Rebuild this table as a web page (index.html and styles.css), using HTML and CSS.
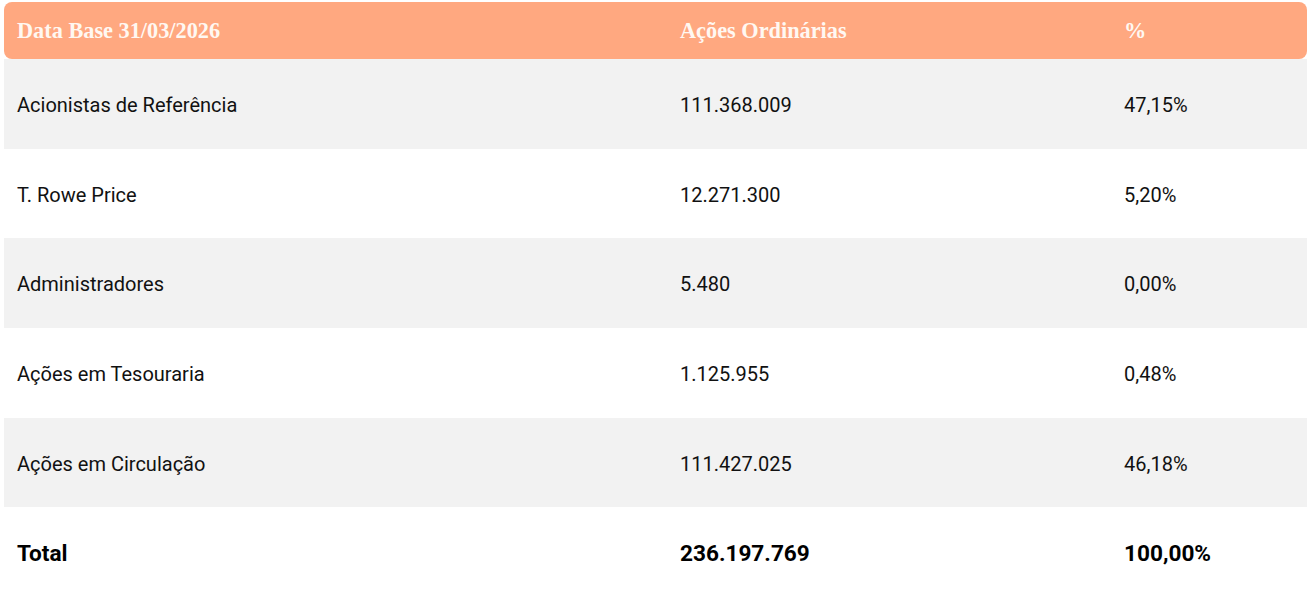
FILE: index.html
```html
<!DOCTYPE html>
<html lang="pt-BR">
<head>
<meta charset="utf-8">
<title>Composição Acionária</title>
<link rel="stylesheet" href="styles.css">
</head>
<body>
<table class="shares">
  <thead>
    <tr class="head-row">
      <th class="col-name">Data Base 31/03/2026</th>
      <th class="col-qty">Ações Ordinárias</th>
      <th class="col-pct">%</th>
    </tr>
  </thead>
  <tbody>
    <tr class="odd"><td>Acionistas de Referência</td><td>111.368.009</td><td>47,15%</td></tr>
    <tr><td>T. Rowe Price</td><td>12.271.300</td><td>5,20%</td></tr>
    <tr class="odd"><td>Administradores</td><td>5.480</td><td>0,00%</td></tr>
    <tr><td>Ações em Tesouraria</td><td>1.125.955</td><td>0,48%</td></tr>
    <tr class="odd"><td>Ações em Circulação</td><td>111.427.025</td><td>46,18%</td></tr>
    <tr class="total"><td>Total</td><td>236.197.769</td><td>100,00%</td></tr>
  </tbody>
</table>
</body>
</html>
```
FILE: styles.css
```css
html, body {
  margin: 0;
  padding: 0;
  background: #ffffff;
}
body {
  padding: 2px 6px 0 4px;
  font-family: Roboto, "Liberation Sans", sans-serif;
  color: #111111;
}
.shares {
  width: 1303px;
  border-collapse: separate;
  border-spacing: 0;
  table-layout: fixed;
}
.col-name { width: 663px; }
.col-qty { width: 444px; }
.col-pct { width: 196px; }
.head-row th {
  background: #ffa880;
  color: #fff8f2;
  font-family: "Liberation Serif", "DejaVu Serif", serif;
  font-weight: 700;
  font-size: 22.3px;
  text-align: left;
  height: 57px;
  padding: 1px 13px 0;
  box-sizing: border-box;
  vertical-align: middle;
}
.head-row th:first-child { border-radius: 8px 0 0 8px; }
.head-row th:last-child { border-radius: 0 8px 8px 0; }
.shares td {
  height: 89.7px;
  padding: 2px 13px 0;
  box-sizing: border-box;
  font-size: 20px;
  vertical-align: middle;
}
.shares tr.odd td { background: #f2f2f2; }
.shares tr.total td {
  font-weight: 700;
  font-size: 22.6px;
  color: #000000;
}
```
